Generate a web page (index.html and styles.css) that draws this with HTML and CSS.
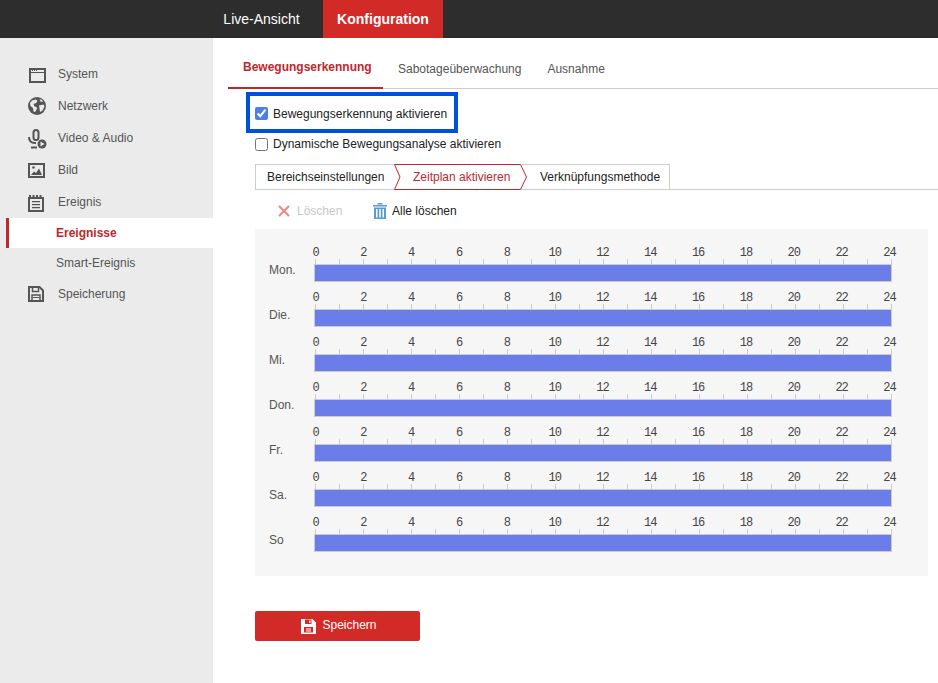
FILE: index.html
```html
<!DOCTYPE html>
<html lang="de">
<head>
<meta charset="utf-8">
<title>Konfiguration</title>
<link rel="stylesheet" href="styles.css">
</head>
<body>
<header class="topbar">
  <a class="top-link">Live-Ansicht</a>
  <a class="top-link top-active">Konfiguration</a>
</header>
<div class="layout">
  <nav class="sidebar">
    <div class="nav-item"><svg class="nav-icon" viewBox="0 0 18 18"><path fill="none" stroke="#555" stroke-width="2" d="M2 4h15v13H2z"/><path fill="none" stroke="#555" d="M2 7.500h15"/><path fill="#555" d="M4 5h1v1H4zM6 5h1v1H6zM8 5h1v1H8z"/></svg><span>System</span></div>
    <div class="nav-item"><svg class="nav-icon" viewBox="0 0 18 18"><circle cx="9" cy="9" r="9" fill="#555"/><path fill="#ebebeb" d="M4 3.500l4-1 1.500 1.500-1.500 2-2.500 1 1 2.500 2 .5 .5 2-2 3-1.500-.5-.5-3.500-2.500-2-.5-3zM11 8.500l4.500-1 1 2-2 4-2.500 1.500-.5-3.500zM11.500 2l2.500 1 1 2-2.500-.5z"/></svg><span>Netzwerk</span></div>
    <div class="nav-item"><svg class="nav-icon" viewBox="0 0 18 18"><rect x="5.500" y="1" width="5" height="10" rx="2.500" fill="none" stroke="#555" stroke-width="2"/><path fill="none" stroke="#555" stroke-width="2" d="M1 8c0 4 2 6 6 6h1M3 18.500h6"/><circle cx="14" cy="15" r="4.500" fill="#555"/><path fill="#ebebeb" d="M12.500 12.500l4 2.500-4 2.500z"/></svg><span>Video &amp; Audio</span></div>
    <div class="nav-item"><svg class="nav-icon" viewBox="0 0 18 18"><path fill="none" stroke="#555" stroke-width="2" d="M1 3h15v13H1z"/><path fill="#555" d="M3 14l3-3.500 2 1.500 3-4.500 3 6.500z"/><circle cx="5.500" cy="6.500" r="1.300" fill="#555"/></svg><span>Bild</span></div>
    <div class="nav-item"><svg class="nav-icon" viewBox="0 0 18 18"><path fill="none" stroke="#555" stroke-width="2" d="M1 5h14v13H1z"/><path fill="#555" d="M1 2h2v3H1zM4.500 2h2v3h-2zM8 2h2v3H8zM11.500 2h2v3h-2zM4 8h8v1.300H4zM4 11h8v1.300H4zM4 14h8v1.300H4z"/></svg><span>Ereignis</span></div>
    <div class="sub-item sub-active">Ereignisse</div>
    <div class="sub-item">Smart-Ereignis</div>
    <div class="nav-item"><svg class="nav-icon" viewBox="0 0 18 18"><path fill="none" stroke="#555" stroke-width="2" d="M1 2h10.500L15 5.500V16H1z"/><path fill="none" stroke="#555" stroke-width="1.500" d="M4.500 2v4.500h6V2M4 16v-6h8v6"/><path fill="#555" d="M5 12h6v1H5z"/></svg><span>Speicherung</span></div>
  </nav>
  <main class="content">
    <div class="tabs">
      <div class="tab tab-active">Bewegungserkennung</div>
      <div class="tab">Sabotageüberwachung</div>
      <div class="tab">Ausnahme</div>
    </div>
    <div class="form">
      <label class="check check-marked"><input type="checkbox" checked><span>Bewegungserkennung aktivieren</span></label>
      <label class="check"><input type="checkbox"><span>Dynamische Bewegungsanalyse aktivieren</span></label>
      <div class="steps">
        <div class="step">Bereichseinstellungen</div>
        <div class="step step-active">Zeitplan aktivieren
          <svg class="step-shape" viewBox="0 0 133 26" preserveAspectRatio="none"><path fill="#fff" stroke="#c0272d" d="M0.500 0.500H126.500L132.500 13L126.500 25.500H0.500L6 13Z"/></svg>
        </div>
        <div class="step step-last">Verknüpfungsmethode</div>
      </div>
      <div class="toolbar">
        <div class="tool tool-off"><svg class="tool-icon-x" viewBox="0 0 12 12"><path fill="none" stroke="#f08a84" stroke-width="2.200" d="M1 1l10 10M11 1L1 11"/></svg>Löschen</div>
        <div class="tool"><svg class="tool-icon-bin" viewBox="0 0 14 16"><path fill="#5b9bd5" fill-rule="evenodd" d="M0 2h14v1.500H0zM4.500 0h5v1.500h-5zM1 4.500h12V16H1zM3 6v8.500h1.500V6zM6.250 6v8.500h1.500V6zM9.500 6v8.500H11V6z"/></svg>Alle löschen</div>
      </div>
      <section class="schedule">
        <div class="day"><div class="day-name">Mon.</div><div class="track"><div class="scale"><span>0</span><span>2</span><span>4</span><span>6</span><span>8</span><span>10</span><span>12</span><span>14</span><span>16</span><span>18</span><span>20</span><span>22</span><span>24</span></div><div class="ticks"></div><div class="bar"></div></div></div>
        <div class="day"><div class="day-name">Die.</div><div class="track"><div class="scale"><span>0</span><span>2</span><span>4</span><span>6</span><span>8</span><span>10</span><span>12</span><span>14</span><span>16</span><span>18</span><span>20</span><span>22</span><span>24</span></div><div class="ticks"></div><div class="bar"></div></div></div>
        <div class="day"><div class="day-name">Mi.</div><div class="track"><div class="scale"><span>0</span><span>2</span><span>4</span><span>6</span><span>8</span><span>10</span><span>12</span><span>14</span><span>16</span><span>18</span><span>20</span><span>22</span><span>24</span></div><div class="ticks"></div><div class="bar"></div></div></div>
        <div class="day"><div class="day-name">Don.</div><div class="track"><div class="scale"><span>0</span><span>2</span><span>4</span><span>6</span><span>8</span><span>10</span><span>12</span><span>14</span><span>16</span><span>18</span><span>20</span><span>22</span><span>24</span></div><div class="ticks"></div><div class="bar"></div></div></div>
        <div class="day"><div class="day-name">Fr.</div><div class="track"><div class="scale"><span>0</span><span>2</span><span>4</span><span>6</span><span>8</span><span>10</span><span>12</span><span>14</span><span>16</span><span>18</span><span>20</span><span>22</span><span>24</span></div><div class="ticks"></div><div class="bar"></div></div></div>
        <div class="day"><div class="day-name">Sa.</div><div class="track"><div class="scale"><span>0</span><span>2</span><span>4</span><span>6</span><span>8</span><span>10</span><span>12</span><span>14</span><span>16</span><span>18</span><span>20</span><span>22</span><span>24</span></div><div class="ticks"></div><div class="bar"></div></div></div>
        <div class="day"><div class="day-name">So</div><div class="track"><div class="scale"><span>0</span><span>2</span><span>4</span><span>6</span><span>8</span><span>10</span><span>12</span><span>14</span><span>16</span><span>18</span><span>20</span><span>22</span><span>24</span></div><div class="ticks"></div><div class="bar"></div></div></div>
      </section>
      <button class="save" type="button"><svg class="save-icon" viewBox="0 0 15 15"><path fill="#fff" fill-rule="evenodd" d="M0 0h11.500L15 3.500V15H0zM4 0.500V5h6.500V0.500zM8 1.500h1.500v2.500H8zM3 8v5.500h9V8zM5 9.500h5v1H5zM5 11.500h5v1H5z"/></svg>Speichern</button>
    </div>
  </main>
</div>
</body>
</html>
```
FILE: styles.css
```css
* { box-sizing: border-box; }
html, body { margin: 0; padding: 0; height: 100%; }
body {
  width: 938px;
  height: 683px;
  overflow: hidden;
  background: #fff;
  font-family: "Liberation Sans", Arial, sans-serif;
  font-size: 12px;
  color: #333;
}

.topbar {
  display: flex;
  height: 38px;
  padding-left: 213px;
  background: #2d2d2d;
}
.top-link {
  display: flex;
  align-items: center;
  justify-content: center;
  color: #fff;
  font-size: 14px;
}
.top-link:first-child { width: 97px; }
.top-active {
  width: 120px;
  margin-left: 13px;
  background: #d12a27;
  font-weight: bold;
}

.layout { display: flex; height: 645px; }

.sidebar {
  flex: 0 0 213px;
  padding-top: 20px;
  background: #ebebeb;
  color: #555;
}
.nav-item {
  display: flex;
  align-items: center;
  gap: 12px;
  height: 32px;
  padding-left: 28px;
}
.nav-icon { flex: none; width: 18px; height: 18px; display: block; overflow: visible; }
.sub-item {
  height: 30px;
  margin-left: 6px;
  padding-left: 50px;
  line-height: 30px;
  color: #555;
}
.sub-active {
  padding-left: 47px;
  border-left: 3px solid #c0272d;
  background: #fff;
  color: #c0272d;
  font-weight: bold;
}

.content { flex: 1; min-width: 0; padding-left: 15px; }

.tabs {
  display: flex;
  height: 51px;
  border-bottom: 1px solid #ccc;
}
.tab {
  padding: 24px 13px 0;
  color: #555;
}
.tab-active {
  width: 155px;
  padding: 22px 0 0 15px;
  border-bottom: 2px solid #c0272d;
  margin-bottom: -1px;
  color: #c0272d;
  font-weight: bold;
}
.tab-active + .tab { padding-left: 15px; }

.form { padding-left: 27px; }

.check {
  display: flex;
  align-items: center;
  height: 20px;
  color: #222;
}
.check input {
  width: 13px;
  height: 13px;
  margin: 0 5px 0 0;
  accent-color: #4a80e8;
  flex: none;
}
.check-marked {
  width: 212px;
  height: 41px;
  margin: 3px 0 1px -9px;
  padding: 2px 0 0 5px;
  border: 4px solid #0050e0;
}

.steps {
  display: flex;
  width: 100%;
  height: 26px;
  margin-top: 10px;
  border-bottom: 1px solid #ccc;
  color: #222;
}
.step {
  display: flex;
  align-items: center;
  height: 26px;
  border: 1px solid #ccc;
}
.step:first-child { width: 139px; padding-left: 11px; border-right: 0; }
.step-active {
  position: relative;
  z-index: 1;
  width: 127px;
  padding-left: 19px;
  border: 0;
  color: #c0272d;
}
.step-shape {
  position: absolute;
  top: 0;
  left: 0;
  width: 133px;
  height: 26px;
  z-index: -1;
}
.step-last { width: 149px; padding-left: 19px; border-left: 0; }

.toolbar {
  display: flex;
  align-items: center;
  height: 39px;
  padding: 2px 0 0 23px;
  color: #222;
}
.tool { display: flex; align-items: center; }
.tool-off { width: 95px; color: #c8c8c8; }
.tool-icon-x { width: 12px; height: 12px; margin-right: 7px; }
.tool-icon-bin { width: 14px; height: 16px; margin-right: 5px; }

.schedule {
  width: 673px;
  height: 347px;
  padding: 8px 0 0 14px;
  background: #f6f6f6;
  color: #555;
}
.day {
  display: flex;
  align-items: flex-end;
  height: 45px;
}
.day-name { width: 45px; padding-bottom: 5px; line-height: 14px; }
.track { width: 578px; }
.scale {
  display: flex;
  justify-content: space-between;
  width: 574px;
  height: 14px;
  margin-left: 1.5px;
  font-family: "Liberation Mono", monospace;
  font-size: 12px;
  letter-spacing: -1px;
  line-height: 16px;
  color: #444;
}
.scale span { width: 0; display: flex; justify-content: center; }
.ticks {
  width: 577px;
  height: 5px;
  margin-left: 1px;
  background: repeating-linear-gradient(to right, #ccc 0 1px, transparent 1px 24px);
}
.bar {
  height: 18px;
  border: 1px solid #ccc;
  background: #6a7de8;
}

.save {
  display: flex;
  align-items: center;
  justify-content: center;
  width: 165px;
  height: 30px;
  margin-top: 35px;
  padding: 0 0 2px 3px;
  border: 0;
  border-radius: 2px;
  background: #d12a27;
  color: #fff;
  font-family: inherit;
  font-size: 12px;
}
.save-icon { width: 15px; height: 15px; margin: 2px 6px 0 0; }
```
